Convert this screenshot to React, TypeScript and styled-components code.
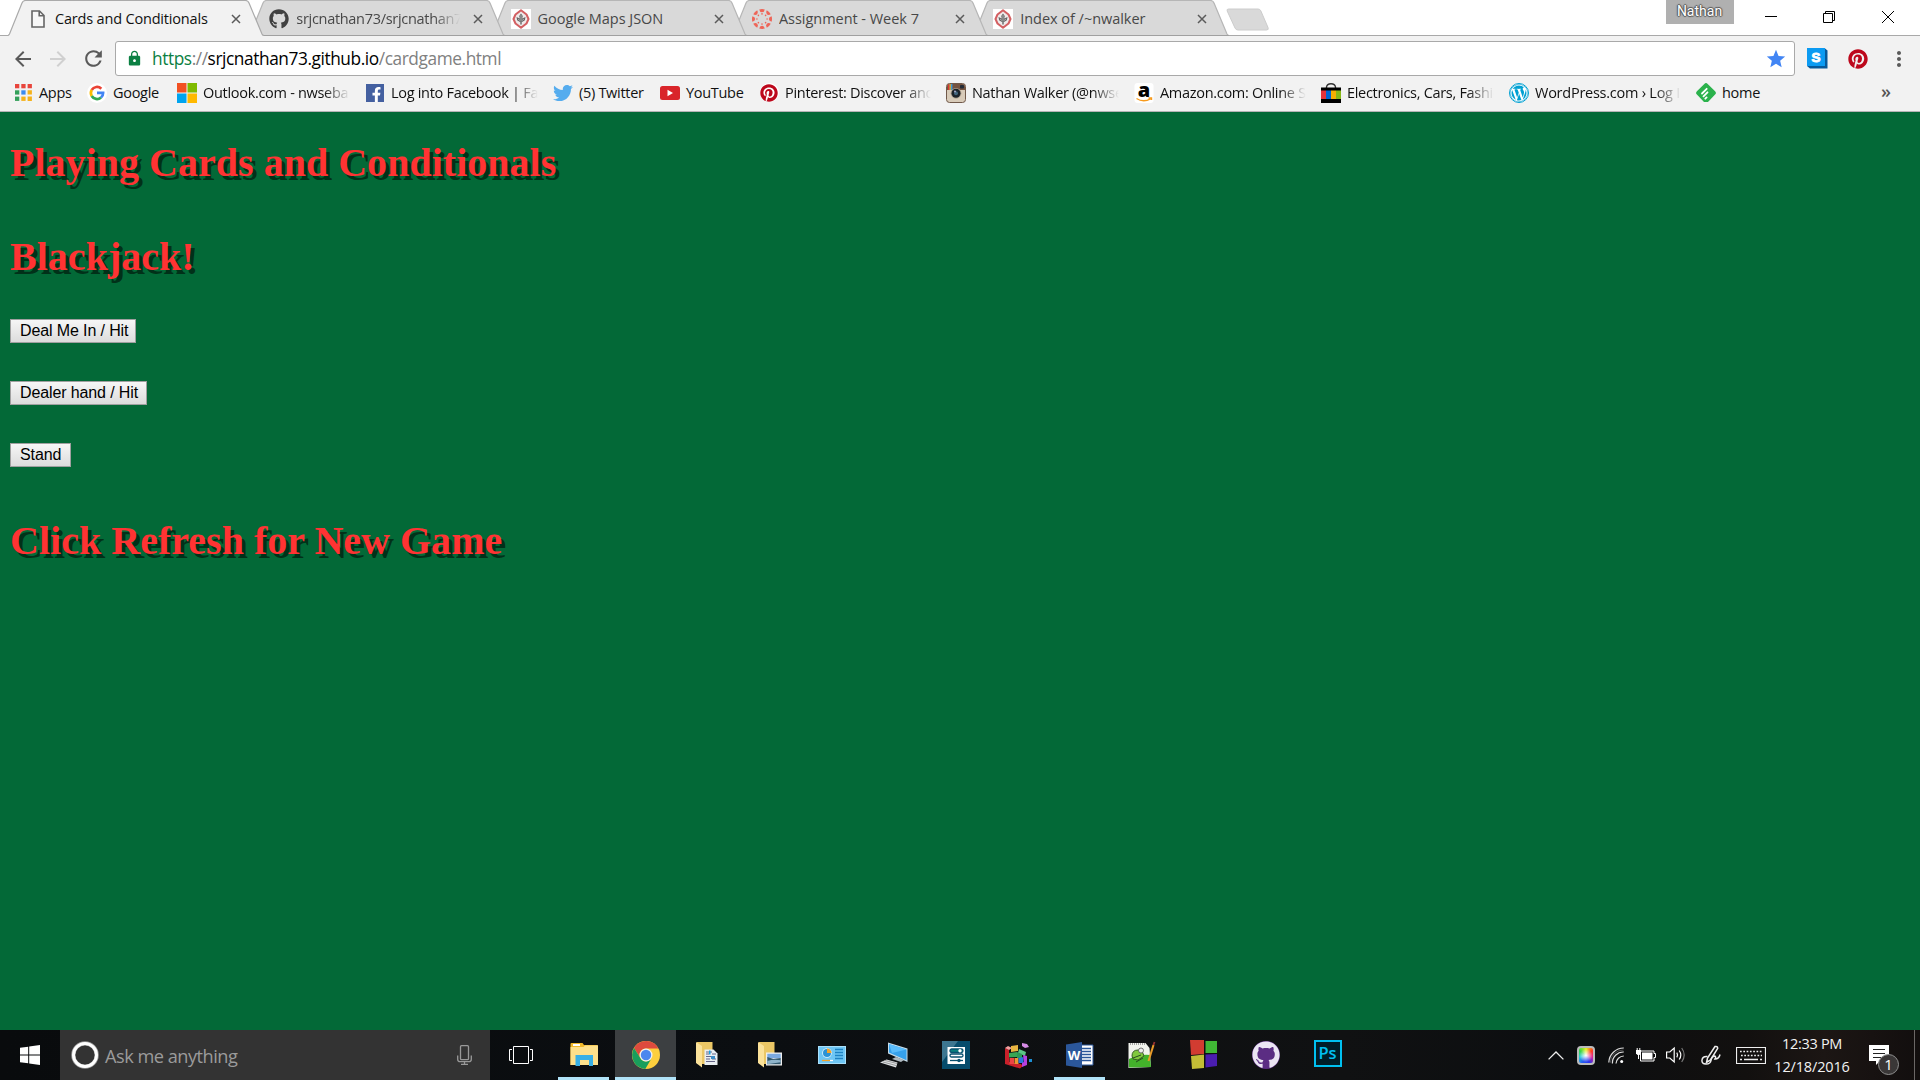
import React from "react";
import styled, { createGlobalStyle, css } from "styled-components";
import { FaGithub, FaTwitter, FaPinterest, FaWordpress, FaFacebookF } from "react-icons/fa";
import { MdLock, MdStar, MdArrowBack, MdArrowForward, MdRefresh, MdMoreVert } from "react-icons/md";

const ui = `"Open Sans", "Noto Sans", sans-serif`;

const GlobalStyle = createGlobalStyle`
  html, body { margin: 0; padding: 0; }
  * { box-sizing: border-box; }
  svg { display: block; flex: none; }
`;

const Screen = styled.div`
  width: 1920px;
  height: 1080px;
  display: flex;
  flex-direction: column;
  overflow: hidden;
  background: #fff;
  font-family: ${ui};
`;

/* ---------- tab strip ---------- */

const TabStrip = styled.header`
  height: 36px;
  flex: none;
  display: flex;
  padding-left: 8px;
  box-shadow: inset 0 -1px 0 #a9a9a9;
`;

const Tab = styled.div<{ $z: number }>`
  display: grid;
  grid-template-columns: 256.4px;
  width: 256.4px;
  height: 36px;
  flex: none;
  margin-right: -15.1px;
  position: relative;
  z-index: ${(p) => p.$z};
  > * { grid-area: 1 / 1; }
`;

const TabContent = styled.div<{ $active: boolean }>`
  display: flex;
  align-items: center;
  min-width: 0;
  padding: 4px 18px 3px 20px;
  height: 36px;
  color: ${(p) => (p.$active ? "#111" : "#484848")};
`;

const TabIcon = styled.span`
  width: 20px;
  height: 20px;
  flex: none;
  display: flex;
  margin: 1px 7px 0 0;
  justify-content: center;
  align-items: center;
`;

const fade = css`
  mask-image: linear-gradient(to right, #000 calc(100% - 26px), transparent);
`;

const TabTitle = styled.span<{ $ls: number; $fade?: boolean }>`
  flex: 1;
  min-width: 0;
  overflow: hidden;
  white-space: nowrap;
  font-size: 14.5px;
  line-height: 22px;
  letter-spacing: ${(p) => p.$ls}px;
  ${(p) => p.$fade && fade}
`;

const TabClose = styled.span`
  width: 20px;
  flex: none;
  margin: 1px 0 0 8px;
  display: flex;
  justify-content: center;
`;

const NewTab = styled.svg`
  margin: 8px 0 0 12px;
`;

const WindowControls = styled.div`
  margin: 0 3px 0 auto;
  display: flex;
  align-items: flex-start;
`;

const ProfileBadge = styled.div`
  width: 68px;
  height: 24px;
  margin-right: 8px;
  background: #b0b0b0;
  color: #fff;
  font: 14px/23px Roboto, sans-serif;
  text-align: center;
  text-shadow: 1px 0 1px #555, -1px 0 1px #555, 0 1px 1px #555, 0 -1px 1px #555;
`;

const ControlButton = styled.div`
  width: 58.5px;
  height: 34px;
  display: flex;
  align-items: center;
  justify-content: center;
`;

/* ---------- toolbar ---------- */

const Toolbar = styled.div`
  height: 40px;
  flex: none;
  display: flex;
  align-items: flex-start;
  padding: 5px 9px 0 11px;
  background: #f2f2f2;
`;

const NavButton = styled.div<{ $w: number; $dim?: boolean }>`
  width: ${(p) => p.$w}px;
  height: 35px;
  display: flex;
  align-items: center;
  color: ${(p) => (p.$dim ? "#d0d0d0" : "#5a5a5a")};
`;

const AddressBar = styled.div`
  width: 1680px;
  height: 35px;
  display: flex;
  align-items: center;
  padding: 0 7px 0 10px;
  background: #fff;
  border: 1px solid #a9a9a9;
  border-radius: 3px;
`;

const Url = styled.span`
  flex: 1;
  margin-left: 9px;
  font-size: 17.3px;
  line-height: 32px;
  letter-spacing: -0.42px;
  white-space: nowrap;
  color: #808080;
`;
const Scheme = styled.span`color: #0b8043;`;
const Host = styled.span`color: #000;`;

const Extension = styled.div<{ $ml: number }>`
  margin-left: ${(p) => p.$ml}px;
  height: 35px;
  display: flex;
  align-items: center;
`;

/* ---------- bookmarks ---------- */

const BookmarksBar = styled.nav`
  height: 36px;
  flex: none;
  display: flex;
  align-items: center;
  padding: 0 0 2px 13px;
  background: #f2f2f2;
  border-bottom: 1px solid #b6b4b6;
`;

const Bookmark = styled.div`
  display: flex;
  align-items: center;
  gap: 6px;
  margin-right: 15px;
`;

const BookmarkIcon = styled.span`
  width: 20px;
  height: 20px;
  display: flex;
  align-items: center;
  justify-content: center;
`;

const BookmarkLabel = styled.span<{ $w: number; $ls: number; $fade?: boolean }>`
  width: ${(p) => p.$w + 1}px;
  font-size: 14.5px;
  line-height: 22px;
  letter-spacing: ${(p) => p.$ls}px;
  white-space: nowrap;
  color: #111;
  ${(p) => p.$fade && css`overflow: hidden; ${fade}`}
`;

const Overflow = styled.span`
  margin: 0 29px 3px auto;
  font-size: 18px;
  line-height: 20px;
  font-weight: 600;
  color: #555;
`;

/* ---------- page ---------- */

const Page = styled.main`
  flex: 1;
  display: flex;
  flex-direction: column;
  align-items: flex-start;
  padding: 28px 10px 0;
  background: #036937;
`;

const Heading = styled.h1<{ $mb: number }>`
  margin: 0 0 ${(p) => p.$mb}px;
  font: bold 40px/46px "Liberation Serif", serif;
  letter-spacing: 0.02px;
  color: #ff3333;
  text-shadow: 4px 4px 0 rgba(0, 0, 0, 0.55);
  white-space: nowrap;
`;

const GameButton = styled.button<{ $w: number; $mb: number }>`
  width: ${(p) => p.$w}px;
  height: 24px;
  margin: 0 0 ${(p) => p.$mb}px;
  padding: 0 0 0 9px;
  border: 1px solid #a0a0a0;
  border-radius: 0;
  background: linear-gradient(#f6f6f6, #dcdcdc);
  color: #000;
  font: 16px/20px "Liberation Sans", sans-serif;
  letter-spacing: -0.12px;
  text-align: left;
  white-space: nowrap;
`;

/* ---------- taskbar ---------- */

const Taskbar = styled.footer`
  height: 50px;
  flex: none;
  display: flex;
  align-items: stretch;
  background: linear-gradient(90deg, #090b0d 0%, #0b0e11 40%, #101112 70%, #0c0e10 82%, #12100f 91%, #1c1614 95%, #120e0e 100%);
`;

const StartButton = styled.div`
  width: 60px;
  display: flex;
  align-items: center;
  justify-content: center;
`;

const Search = styled.div`
  width: 430px;
  display: flex;
  align-items: center;
  padding: 0 18px 0 11px;
  background: #333;
`;

const SearchText = styled.span`
  flex: 1;
  margin: 1px 0 0 6px;
  color: #9b9b9b;
  font-size: 18.2px;
  letter-spacing: -0.5px;
`;

const Apps = styled.div`
  display: flex;
  gap: 1px;
`;

const AppCell = styled.div<{ $state?: "open" | "active" }>`
  width: 61px;
  height: 50px;
  display: flex;
  align-items: center;
  justify-content: center;
  background: ${(p) =>
    p.$state === "active"
      ? "linear-gradient(#b0e3f8, #b0e3f8) 0 100% / 61px 3px no-repeat, #3c3f41"
      : p.$state === "open"
      ? "linear-gradient(#b0e3f8, #b0e3f8) 50% 100% / 51px 3px no-repeat"
      : "none"};
  &:first-child { margin-right: 1px; }
`;

const PsIcon = styled.div`
  width: 28px;
  height: 27px;
  margin-bottom: 3px;
  border: 2px solid #00c0f0;
  background: #001d27;
  color: #00c0f0;
  font: 600 16.5px/22px ${ui};
  text-align: center;
`;

const Tray = styled.div`
  margin-left: auto;
  display: flex;
  align-items: center;
`;

const TrayItem = styled.div<{ $w: number }>`
  width: ${(p) => p.$w}px;
  height: 50px;
  display: flex;
  align-items: center;
  justify-content: center;
`;

const Clock = styled.div`
  width: 80px;
  margin: 2px 0 0 1px;
  display: flex;
  flex-direction: column;
  align-items: center;
  color: #f2f2f2;
  font-size: 14.5px;
  line-height: 23px;
  white-space: nowrap;
`;
const ClockLine = styled.span<{ $ls: number }>`letter-spacing: ${(p) => p.$ls}px;`;

const Notifications = styled.div`
  position: relative;
  width: 63px;
  height: 50px;
  padding: 15px 0 0 17px;
  border-right: 1px solid #6b6766;
`;

const CountBadge = styled.span`
  position: absolute;
  left: 26px;
  top: 24px;
  width: 21px;
  height: 21px;
  border: 1px solid #8f8f8f;
  border-radius: 50%;
  background: #3a3737;
  color: #fff;
  font-size: 15px;
  line-height: 19px;
  text-align: center;
`;

const DesktopEdge = styled.div`width: 5px;`;

/* ---------- drawings ---------- */

const Cross = ({ c = "#5a5a5a" }) => (
  <svg width="10" height="10" viewBox="0 0 10 10">
    <path d="M1 1l8 8M9 1l-8 8" stroke={c} strokeWidth="1.5" />
  </svg>
);

const FileIcon = () => (
  <svg width="14" height="18" viewBox="0 0 14 18">
    <path d="M1 1h7.5l4.5 4.5V17H1zM8.2 1v4.8H13" fill="#f8f8f8" stroke="#666" strokeWidth="1.6" />
  </svg>
);

const RoseIcon = () => (
  <svg width="20" height="20" viewBox="0 0 20 20">
    <path fill="#fff" d="M0 0h20v20H0z" />
    <path d="M10 1.2l5.500 4.300L17.500 10l-2 4.500L10 18.800l-5.500-4.300L2.500 10l2-4.500z" fill="#efeaea" stroke="#d35f62" strokeWidth="2" strokeLinejoin="round" />
    <path d="M10 4.500l1.800 2.500-.6 2.500 3.300-1.500-.6 3.200-2.400 1.500-.8.300V15.500H9.300v-2.500l-.8-.3-2.400-1.500L5.500 8l3.300 1.500L8.200 7z" fill="#666" />
    <path d="M10 6v6.500M7 10l2 1.500M13 10l-2 1.500" stroke="#ccc" strokeWidth=".7" />
  </svg>
);

const CanvasIcon = () => (
  <svg width="20" height="20" viewBox="0 0 20 20">
    {[0, 45, 90, 135, 180, 225, 270, 315].map((a) => (
      <g key={a} transform={`rotate(${a} 10 10)`} fill="#ee6558">
        <path d="M7.200 .4Q10-.4 12.800 .4Q12.300 3.100 10 3.200Q7.700 3.100 7.200 .4z" />
        <circle cx="10" cy="4.900" r=".8" />
      </g>
    ))}
  </svg>
);

const AppsIcon = () => (
  <svg width="17" height="17" viewBox="0 0 17 17">
    {["#e8453c", "#e8453c", "#e8453c", "#34a05a", "#3c8bf0", "#f5b21a", "#34a05a", "#f5b21a", "#f5b21a"].map((c, i) => (
      <path key={i} fill={c} d={`M${(i % 3) * 6.300} ${Math.floor(i / 3) * 6.300}h4.300v4.300h-4.300z`} />
    ))}
  </svg>
);

const GoogleIcon = () => (
  <svg width="20" height="20" viewBox="0 0 20 20">
    <circle cx="10" cy="10" r="10" fill="#fff" />
    <g fill="none" strokeWidth="2.700">
      <path d="M14.300 5.700A6.100 6.100 0 0 0 4.700 7" stroke="#ea4335" />
      <path d="M4.700 7a6.100 6.100 0 0 0 0 6" stroke="#fbbc05" />
      <path d="M4.700 13a6.100 6.100 0 0 0 9.300 1.500" stroke="#34a853" />
      <path d="M14 14.500A6.100 6.100 0 0 0 16.100 9.900H10" stroke="#4285f4" />
    </g>
  </svg>
);

const FourSquares = () => (
  <svg width="20" height="20" viewBox="0 0 20 20">
    <path fill="#f25022" d="M0 0h9.500v9.500H0z" /><path fill="#7fba00" d="M10.500 0H20v9.500h-9.500z" />
    <path fill="#00a4ef" d="M0 10.500h9.500V20H0z" /><path fill="#ffb900" d="M10.500 10.500H20V20h-9.500z" />
  </svg>
);

const FacebookTile = styled.span`
  width: 18px;
  height: 18px;
  display: flex;
  justify-content: flex-end;
  align-items: flex-end;
  overflow: hidden;
  background: #4460a0;
  color: #fff;
`;

const YoutubeIcon = () => (
  <svg width="20" height="14" viewBox="0 0 20 14">
    <rect width="20" height="14" rx="2.500" fill="#d9252a" /><path d="M7.500 3.800v6.400L13 7z" fill="#fff" />
  </svg>
);

const PinCircle = styled.span`
  width: 19px;
  height: 19px;
  padding: 0.5px;
  border-radius: 50%;
  background: #fff;
  color: #bd081c;
`;

const CameraIcon = () => (
  <svg width="20" height="20" viewBox="0 0 20 20">
    <rect x=".5" y=".5" width="19" height="19" rx="3" fill="#d8cbb9" stroke="#70594a" />
    <path d="M1 7V3.500Q1 1 3.500 1h13Q19 1 19 3.500V7z" fill="#755340" />
    <path d="M2 1.500h1.300V7H2z" fill="#d33" /><path d="M3.500 1h1.300v6H3.500z" fill="#e8b43a" /><path d="M5 1h1.400v6H5z" fill="#3a9bdc" />
    <rect x="14" y="2" width="4" height="3.500" rx=".8" fill="#242b36" />
    <circle cx="10" cy="10.300" r="5.400" fill="#b2a491" /><circle cx="10" cy="10.300" r="4.500" fill="#1d2329" /><circle cx="10" cy="10.300" r="2" fill="#42647b" /><circle cx="9" cy="8.500" r="1" fill="#aac" />
  </svg>
);

const AmazonIcon = () => (
  <svg width="20" height="20" viewBox="0 0 20 20">
    <rect x=".5" width="19" height="20" rx="3" fill="#fff" />
    <text x="10" y="14" textAnchor="middle" fill="#000" fontFamily="Open Sans, sans-serif" fontWeight="800" fontSize="20">a</text>
    <path d="M2.500 15.500q7 4.500 14 .3M14.500 15h3v2" fill="none" stroke="#f79a1c" strokeWidth="1.400" />
  </svg>
);

const EbayIcon = () => (
  <svg width="20" height="20" viewBox="0 0 20 20">
    <path d="M5.500 5V4Q6 .8 10 .8T14.500 4v1" fill="none" stroke="#333" strokeWidth="1.400" />
    <path fill="#000" d="M0 4.500h20V20H0z" />
    <path fill="#e53238" d="M0 7.500h5V16H0z" /><path fill="#0064d2" d="M5 7.500h5V16H5z" /><path fill="#f5af02" d="M10 7.500h5V16h-5z" /><path fill="#86b817" d="M15 7.500h5V16h-5z" />
  </svg>
);

const WordPressCircle = styled.span`
  width: 20px;
  height: 20px;
  border-radius: 50%;
  border: 1px solid #00a0d2;
  background: #fff;
  color: #00a0d2;
`;

const FeedlyIcon = () => (
  <svg width="20" height="20" viewBox="0 0 20 20">
    <path d="M8.300 .9Q10-.7 11.700 .9l7.400 7.300Q20.800 10 19.100 11.600L12 19H8L.9 11.600Q-.8 10 .9 8.200z" fill="#2bb24c" />
    <path d="M6 10.500L10.700 5.800M7.500 13.300l4-4M9.300 15.700l1.300-1.300" stroke="#fff" strokeWidth="1.800" strokeLinecap="round" />
  </svg>
);

const SkyTile = () => (
  <svg width="21" height="21" viewBox="0 0 21 21">
    <path d="M17.500 0L20.500 2.500v18H3L0 18z" fill="#07599a" /><path d="M0 0h18v18H0z" fill="#0c9bf2" />
    <text x="9" y="13.800" textAnchor="middle" fill="#fff" fontFamily="Liberation Sans, sans-serif" fontWeight="bold" fontSize="13.500" stroke="#fff" strokeWidth=".9">S</text>
  </svg>
);

const WindowsLogo = () => (
  <svg width="20" height="20" viewBox="0 0 20 20" fill="#fff">
    <path d="M0 2.800L8.200 1.700v7.800H0zM9.200 1.500L20 0v9.500H9.200zM0 10.500h8.200v7.800L0 17.200zM9.200 10.500H20V20L9.200 18.500z" />
  </svg>
);

const MicIcon = () => (
  <svg width="15" height="20" viewBox="0 0 15 20" fill="none" stroke="#999" strokeWidth="1.300">
    <rect x="3.500" y=".7" width="8" height="14" rx="1" /><path d="M.7 10.500v3.700q0 2.500 2.500 2.500h8.600q2.500 0 2.500-2.500v-3.700M7.500 17v2M4 19.300h7" />
  </svg>
);

const TaskViewIcon = () => (
  <svg width="24" height="18" viewBox="0 0 24 18" fill="none" stroke="#fff" strokeWidth="1">
    <path d="M4.500 .5h15v17h-15zM3 3.500H.5v11H3M21 3.500h2.500v11H21" />
  </svg>
);

const ExplorerIcon = () => (
  <svg width="28" height="24" viewBox="0 0 28 24">
    <path d="M.5 1Q.5 0 1.500 0h11l1.500 2H27q1 0 1 1v19H.5z" fill="#f0b92b" /><path d="M.5 4h13l1.500-1.500H28V22H.5z" fill="#fde08b" /><path d="M3 1h7v2H3z" fill="#fff" />
    <path d="M5.500 12h17.500v11h-4v-6h-9v6H5.500z" fill="#37afe6" />
  </svg>
);

const ChromeIcon = () => (
  <svg width="28" height="28" viewBox="0 0 28 28">
    <circle cx="14" cy="14" r="14" fill="#fdcf3d" />
    <path d="M2 7A14 14 0 0 1 26.500 7.500H14a6.500 6.500 0 0 0-5.700 9.600z" fill="#dd4b3e" />
    <path d="M2 7A14 14 0 0 0 13.300 28l6-10.300A6.500 6.500 0 0 1 8.300 17z" fill="#199e5c" />
    <circle cx="14" cy="14" r="6.500" fill="#f1f1f1" /><circle cx="14" cy="14" r="5.200" fill="#4a87ee" />
  </svg>
);

const FolderIcon = ({ picture = false }) => (
  <svg width="28" height="28" viewBox="0 0 28 28">
    <path d="M3 1h15.500v22H3z" fill="#ebc765" /><path d="M2 1l6 4v21.500L2 22z" fill="#fbe29a" />
    {picture ? (
      <g><path d="M10 11.500h16v13H10z" fill="#eee" /><path d="M11.300 12.800h13.400v4.500H11.300z" fill="#7ba9e0" /><path d="M11.300 16l6 2 7.400-1v6.300H11.300z" fill="#31576b" /><path d="M11.300 20q6-2 13.400-.8v2q-7 1-13.400 2z" fill="#8eb3ca" /></g>
    ) : (
      <g><path d="M10.500 8.500h9l4 4V24h-13z" fill="#e9eef2" /><path d="M12 11h6M12 13h3M12 15.500h5M12 18h4M12 20.500h9M18 18h4M18 13h4" stroke="#668" strokeWidth="1" /><path d="M17 15h4v3h-4z" fill="#3c8cc7" /><path d="M15 9.500h1.500v4H15z" fill="#1aa0e0" /></g>
    )}
  </svg>
);

const ControlPanelIcon = () => (
  <svg width="28" height="18" viewBox="0 0 28 18">
    <rect x=".5" y=".5" width="27" height="17" fill="#6ec6f5" stroke="#a9e0fb" />
    <circle cx="9" cy="7" r="4.800" fill="#e6f5fc" /><circle cx="9" cy="7" r="4" fill="#2a92d6" /><path d="M9 7V2.500A4.500 4.500 0 0 1 13.500 7z" fill="#f3a42c" />
    <path d="M17 3.500h8M17 6.500h8M17 9.500h8M17 12.500h8" stroke="#1f83c4" strokeWidth="1.300" /><path d="M4 14.500h8" stroke="#f3a42c" strokeWidth="1.300" /><path d="M12 14.500h3" stroke="#fff" strokeWidth="1.300" />
  </svg>
);

const ComputerIcon = () => (
  <svg width="28" height="26" viewBox="0 0 28 26">
    <path d="M8 .5l19.500 6v13.500L8 11.500z" fill="#c7dbe7" /><path d="M9 2l17.500 5.500v10.800L9 10.500z" fill="#36a1ec" /><path d="M9 2l17.500 5.500L12 11z" fill="#5bbcfb" />
    <path d="M12 17l4-2 8 3-3 2z" fill="#aeb9c0" /><path d="M0 20.500l6.500-3 11 3-1.500 5z" fill="#dfe2e4" /><path d="M3 20l13 3.500M5 18.500l12 3" stroke="#888" strokeWidth=".8" />
  </svg>
);

const SlidersIcon = () => (
  <svg width="28" height="28" viewBox="0 0 28 28">
    <path fill="#064c6c" d="M0 0h28v28H0z" /><path d="M0 0h16L0 21z" fill="#3d7690" /><path d="M5.500 6H23v17H5.500z" fill="#fff" />
    <g fill="none" stroke="#07506f" strokeWidth="1.300"><rect x="8" y="8" width="13" height="3.500" rx="1.700" fill="#07807e" /><rect x="8" y="13" width="13" height="3" rx="1.500" /><path d="M8 19.500h13" /></g><circle cx="18" cy="9.700" r="1.700" fill="#fff" /><circle cx="17" cy="19.500" r="1.700" fill="#07506f" />
  </svg>
);

const BlocksIcon = () => (
  <svg width="28" height="28" viewBox="0 0 28 28">
    <path d="M1 7l4 2v12l12 2 2 2-3 2.500L1 23z" fill="#c9202a" /><path d="M1 7l3-2 4 2-3 2z" fill="#f4a0a0" />
    <path d="M7 5l7-1v6l-7 1z" fill="#e8b541" /><path d="M5 12l8-1v5l-8 .5z" fill="#39a653" /><path d="M15 8l7 3-1 4-7-3z" fill="#5cc486" />
    <path d="M13 11l5 2v4h-5z" fill="#2c9b58" /><path d="M5.500 17h4.500v6H5.500z" fill="#e44" /><path d="M10.500 17h4v6h-4z" fill="#ee9832" /><path d="M14.500 17l5-1v6h-5z" fill="#2877df" /><path d="M19 14l4 1v9l-5 2v-4l2-1z" fill="#b73fe0" />
    <path d="M18 2l5 1 2 3-4 1-3-2z" fill="#d68be5" /><path d="M25 18h3v3h-3z" fill="#1c8fd5" />
  </svg>
);

const WordIcon = () => (
  <svg width="28" height="26" viewBox="0 0 28 26">
    <path d="M15 3h12v20H15z" fill="#fff" stroke="#2b579a" /><path d="M16 6.500h9M16 9.500h9M16 12.500h9M16 15.500h9M16 18.500h9" stroke="#2b579a" strokeWidth="1.300" />
    <path d="M0 2.500L16 0v26L0 23.500z" fill="#2b579a" />
    <text x="8" y="18" textAnchor="middle" fill="#fff" fontFamily="Open Sans, sans-serif" fontWeight="bold" fontSize="13">W</text>
  </svg>
);

const NotepadIcon = () => (
  <svg width="28" height="28" viewBox="0 0 28 28">
    <path d="M.5 2h17l4 5 1.500 19L.5 27z" fill="#f2f4ee" /><path d="M1 18q10-5 21-4l1 12L1 26.500z" fill="#43b22b" />
    <path d="M2 3h15" stroke="#888" strokeWidth="1.500" strokeDasharray="1 1" /><path d="M4 15q0-6 6-6l4 1 2 5-6 4-5-1z" fill="#80c83e" stroke="#375d25" /><circle cx="13" cy="9.500" r="2.500" fill="#eee" stroke="#555" strokeWidth=".8" />
    <path d="M5 17l8-3M8 21l7-4" stroke="#264d1e" /><path d="M20.500 20l5-16" stroke="#e89b29" strokeWidth="2" /><path d="M25.500 4l1-3" stroke="#933" strokeWidth="1.800" />
  </svg>
);

const ColourPanes = () => (
  <svg width="28" height="30" viewBox="0 0 28 30">
    <path d="M0 0h14v14L1 15z" fill="#d23c31" /><path d="M15.500 1H27v12H15.500z" fill="#40b735" /><path d="M1 16l13-1.500V28L2 29z" fill="#c3bd36" /><path d="M15.500 14.500L27 14v12l-11.500 1.500z" fill="#4a1db0" />
  </svg>
);

const DesktopCat = styled.span`
  width: 28px;
  height: 28px;
  border-radius: 50%;
  background: #5b2d83;
  color: #ebe5f3;
`;

const Chevron = () => (
  <svg width="16" height="9" viewBox="0 0 16 9"><path d="M.6 8.400L8 1l7.400 7.400" fill="none" stroke="#eee" strokeWidth="1.300" /></svg>
);

const PaletteTile = styled.span`
  width: 18px;
  height: 19px;
  border: 2px solid #bbb;
  border-radius: 4px;
  background: radial-gradient(circle, rgba(255, 255, 255, 0.95) 5%, rgba(255, 255, 255, 0) 65%),
    conic-gradient(from 0deg, #e9f21f, #ff3b21, #e21e91, #2933ec, #2457f2, #20cbd5, #37d546, #e9f21f);
`;

const WifiIcon = () => (
  <svg width="17" height="17" viewBox="0 0 17 17" fill="none" stroke="#ddd" strokeWidth="1.200">
    <path d="M.8 15.500A15 15 0 0 1 15.800 1M4.400 16.500A11 11 0 0 1 15.800 5M8 16.500A8 8 0 0 1 15.800 9" /><circle cx="13.700" cy="14.500" r="1.500" fill="#fff" stroke="none" />
    <path d="M2.300 15.800A13 13 0 0 1 15.500 3" stroke="#777" strokeWidth=".6" />
  </svg>
);

const BatteryIcon = () => (
  <svg width="20" height="14" viewBox="0 0 20 14">
    <path d="M4.500 3h13.500v2.500h1.500v4H18V13H4.500z" fill="none" stroke="#fff" /><path d="M6 4.500h10.500v7H6z" fill="#fff" />
    <path d="M0 2h5v3.500L3.500 7H1.500L0 5.500z" fill="#fff" /><path d="M1.200 0v2M3.800 0v2M2.500 7v4" stroke="#fff" />
  </svg>
);

const SpeakerIcon = () => (
  <svg width="20" height="18" viewBox="0 0 20 18" fill="none" stroke="#fff" strokeWidth="1.200">
    <path d="M.6 6h3.200L8.200 2v14l-4.400-4H.6z" /><path d="M10.800 6.700q1.500 2.300 0 4.600M13.200 4.500q3.200 4.500 0 9" /><path d="M15.700 2q5 7 0 14" stroke="#777" />
  </svg>
);

const PenIcon = () => (
  <svg width="20" height="21" viewBox="0 0 20 21" fill="none" stroke="#eee" strokeWidth="1.500">
    <path d="M5.500 17.500L6.500 13 14 1.500q2.500-.5 2.700 1.800L9.500 15z" /><path d="M6.500 11.500q-5-.5-5.500 3.500t4 4 5-3.500q.5-4 3.500-4.500 2 .5.500 3 4 0 5-4.500" />
  </svg>
);

const KeyboardIcon = () => (
  <svg width="30" height="17" viewBox="0 0 30 17" fill="none" stroke="#eee">
    <path d="M.5 .5h29v16H.5z" strokeWidth="1.200" /><path d="M4 4.500h22M5 8.500h21" strokeWidth="1.500" strokeDasharray="1.700 1.600" /><path d="M4 12.500h2M8 12.500h14M24 12.500h2" strokeWidth="1.300" />
  </svg>
);

const MessageIcon = () => (
  <svg width="20" height="20" viewBox="0 0 20 20"><path d="M0 0h20v16h-9l-4 4v-4H0z" fill="#fff" /><path d="M4 4.500h12M4 8.500h12M4 12.500h8" stroke="#222" strokeWidth="1.200" /></svg>
);

const TabShape = ({ active }: { active: boolean }) => (
  <svg width="257" height="36" viewBox="0 0 257 36">
    <path d="M0 36Q1 35 1.500 34L14 3Q15 .5 17.500 .5H237.500Q240 .5 241 3L254 34Q254.700 35.500 256 36z" fill={active ? "#f2f2f2" : "#d9d9d9"} />
    <path d="M0 35.500Q1 35 1.500 34L14 3Q15 .5 17.500 .5H237.500Q240 .5 241 3L254 34Q254.700 35.500 256 35.500" fill="none" stroke={active ? "#aaa" : "#b6b6b6"} strokeWidth="1.200" />
    {!active && <path d="M0 35.500h256" stroke="#a0a0a0" />}
  </svg>
);

const tabs = [
  { title: "Cards and Conditionals", icon: <FileIcon />, ls: -0.18 },
  { title: "srjcnathan73/srjcnathan73", icon: <FaGithub size={20} color="#404040" />, ls: -0.3, fade: true },
  { title: "Google Maps JSON", icon: <RoseIcon />, ls: -0.03 },
  { title: "Assignment - Week 7", icon: <CanvasIcon />, ls: -0.03 },
  { title: "Index of /~nwalker", icon: <RoseIcon />, ls: -0.03 },
];

const bookmarks = [
  { label: "Apps", w: 32, ls: -0.3, icon: <AppsIcon /> },
  { label: "Google", w: 48, ls: -0.3, icon: <GoogleIcon /> },
  { label: "Outlook.com - nwseba", w: 146, ls: -0.3, fade: true, icon: <FourSquares /> },
  { label: "Log into Facebook | Fac", w: 146, ls: -0.3, fade: true, icon: <FacebookTile><FaFacebookF size={15} /></FacebookTile> },
  { label: "(5) Twitter", w: 65, ls: -0.3, icon: <FaTwitter size={20} color="#55acee" /> },
  { label: "YouTube", w: 57, ls: -0.3, icon: <YoutubeIcon /> },
  { label: "Pinterest: Discover and", w: 145, ls: -0.3, fade: true, icon: <PinCircle><FaPinterest size={18} /></PinCircle> },
  { label: "Nathan Walker (@nwse", w: 146, ls: -0.3, fade: true, icon: <CameraIcon /> },
  { label: "Amazon.com: Online Sh", w: 145, ls: -0.3, fade: true, icon: <AmazonIcon /> },
  { label: "Electronics, Cars, Fashio", w: 146, ls: -0.3, fade: true, icon: <EbayIcon /> },
  { label: "WordPress.com › Log In", w: 145, ls: -0.25, fade: true, icon: <WordPressCircle><FaWordpress size={18} /></WordPressCircle> },
  { label: "home", w: 40, ls: -0.3, icon: <FeedlyIcon /> },
];

const apps: { icon: React.ReactNode; state?: "open" | "active" }[] = [
  { icon: <TaskViewIcon /> },
  { icon: <ExplorerIcon />, state: "open" },
  { icon: <ChromeIcon />, state: "active" },
  { icon: <FolderIcon /> },
  { icon: <FolderIcon picture /> },
  { icon: <ControlPanelIcon /> },
  { icon: <ComputerIcon /> },
  { icon: <SlidersIcon /> },
  { icon: <BlocksIcon /> },
  { icon: <WordIcon />, state: "open" },
  { icon: <NotepadIcon /> },
  { icon: <ColourPanes /> },
  { icon: <DesktopCat><FaGithub size={28} /></DesktopCat> },
  { icon: <PsIcon>Ps</PsIcon> },
];

export default function App() {
  return (
    <Screen>
      <GlobalStyle />
      <TabStrip>
        {tabs.map((t, i) => (
          <Tab key={t.title} $z={tabs.length - i}>
            <TabShape active={i === 0} />
            <TabContent $active={i === 0}>
              <TabIcon>{t.icon}</TabIcon>
              <TabTitle $ls={t.ls} $fade={t.fade}>{t.title}</TabTitle>
              <TabClose><Cross /></TabClose>
            </TabContent>
          </Tab>
        ))}
        <NewTab width="44" height="23" viewBox="0 0 44 23">
          <path d="M2.500 1H32Q34 1 34.800 2.800L42 19.500Q43 22 40.500 22H12Q9.800 22 9 20L1.200 3Q.5 1 2.500 1z" fill="#d9d9d9" stroke="#ccc" />
        </NewTab>
        <WindowControls>
          <ProfileBadge>Nathan</ProfileBadge>
          <ControlButton><svg width="12" height="2"><path d="M0 0h12v1H0z" /></svg></ControlButton>
          <ControlButton><svg width="12" height="12" fill="none" stroke="#000"><path d="M.5 2.500h9v9h-9zM2.500 2.500v-2h9v9h-2" /></svg></ControlButton>
          <ControlButton><svg width="12" height="12" stroke="#000"><path d="M0 0l12 12M12 0L0 12" /></svg></ControlButton>
        </WindowControls>
      </TabStrip>

      <Toolbar>
        <NavButton $w={35}><MdArrowBack size={24} /></NavButton>
        <NavButton $w={35} $dim><MdArrowForward size={24} /></NavButton>
        <NavButton $w={34}><MdRefresh size={25} /></NavButton>
        <AddressBar>
          <MdLock size={17} color="#0b8043" />
          <Url><Scheme>https</Scheme>://<Host>srjcnathan73.github.io</Host>/cardgame.html</Url>
          <MdStar size={22} color="#4285f4" />
        </AddressBar>
        <Extension $ml={12}><SkyTile /></Extension>
        <Extension $ml={20}><FaPinterest size={20} color="#bd081c" /></Extension>
        <Extension $ml={19}><MdMoreVert size={24} color="#5a5a5a" /></Extension>
      </Toolbar>

      <BookmarksBar>
        {bookmarks.map((b) => (
          <Bookmark key={b.label}>
            <BookmarkIcon>{b.icon}</BookmarkIcon>
            <BookmarkLabel $w={b.w} $ls={b.ls} $fade={b.fade}>{b.label}</BookmarkLabel>
          </Bookmark>
        ))}
        <Overflow>»</Overflow>
      </BookmarksBar>

      <Page>
        <Heading $mb={48}>Playing Cards and Conditionals</Heading>
        <Heading $mb={39}>Blackjack!</Heading>
        <GameButton $w={126} $mb={38}>Deal Me In / Hit</GameButton>
        <GameButton $w={137} $mb={38}>Dealer hand / Hit</GameButton>
        <GameButton $w={61} $mb={51}>Stand</GameButton>
        <Heading $mb={0}>Click Refresh for New Game</Heading>
      </Page>

      <Taskbar>
        <StartButton><WindowsLogo /></StartButton>
        <Search>
          <svg width="28" height="28" viewBox="0 0 28 28"><circle cx="14" cy="14" r="11.700" fill="none" stroke="#999" strokeWidth="4.200" /><circle cx="14" cy="14" r="11.500" fill="none" stroke="#fff" strokeWidth="3" /></svg>
          <SearchText>Ask me anything</SearchText>
          <MicIcon />
        </Search>
        <Apps>
          {apps.map((a, i) => (
            <AppCell key={i} $state={a.state}>{a.icon}</AppCell>
          ))}
        </Apps>
        <Tray>
          <TrayItem $w={30}><Chevron /></TrayItem>
          <TrayItem $w={30}><PaletteTile /></TrayItem>
          <TrayItem $w={30}><WifiIcon /></TrayItem>
          <TrayItem $w={30}><BatteryIcon /></TrayItem>
          <TrayItem $w={30}><SpeakerIcon /></TrayItem>
          <TrayItem $w={40}><PenIcon /></TrayItem>
          <TrayItem $w={40}><KeyboardIcon /></TrayItem>
        </Tray>
        <Clock>
          <ClockLine $ls={-0.3}>12:33 PM</ClockLine>
          <ClockLine $ls={-0.15}>12/18/2016</ClockLine>
        </Clock>
        <Notifications>
          <MessageIcon />
          <CountBadge>1</CountBadge>
        </Notifications>
        <DesktopEdge />
      </Taskbar>
    </Screen>
  );
}
